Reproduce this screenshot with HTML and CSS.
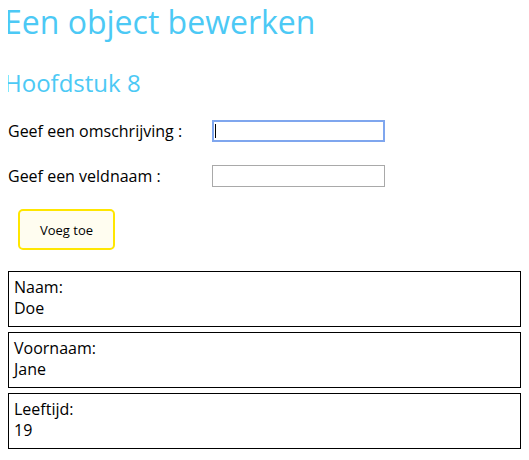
FILE: index.html
```html
<!DOCTYPE html>
<html lang="nl">
<head>
<meta charset="utf-8">
<title>Een object bewerken</title>
<link rel="stylesheet" href="styles.css">
</head>
<body>
<h1 class="title">Een object bewerken</h1>
<h2 class="subtitle">Hoofdstuk 8</h2>
<form class="form">
  <div class="row">
    <label class="label" for="omschrijving">Geef een omschrijving :</label>
    <span class="field-wrap">
      <input class="field field-focus" id="omschrijving" type="text">
      <span class="caret"></span>
    </span>
  </div>
  <div class="row">
    <label class="label" for="veldnaam">Geef een veldnaam :</label>
    <input class="field" id="veldnaam" type="text">
  </div>
  <button class="btn" type="button">Voeg toe</button>
</form>
<div class="list">
  <div class="item"><div>Naam:</div><div>Doe</div></div>
  <div class="item"><div>Voornaam:</div><div>Jane</div></div>
  <div class="item"><div>Leeftijd:</div><div>19</div></div>
</div>
</body>
</html>
```

FILE: styles.css
```css
body {
  margin: 0 8px;
  font-family: "Open Sans", sans-serif;
  color: #000;
  background: #fff;
}
.title {
  margin: 0 0 0 -4px;
  font-size: 32px;
  font-weight: 400;
  line-height: normal;
  color: #4cc9f5;
}
.subtitle {
  margin: 23px 0 0 -4px;
  font-size: 24px;
  font-weight: 400;
  line-height: normal;
  color: #4cc9f5;
}
.form {
  margin-top: 21px;
}
.row {
  display: flex;
  align-items: center;
  height: 22px;
  margin-bottom: 23px;
}
.row + .row {
  margin-bottom: 22px;
}
.label {
  width: 204px;
  font-size: 16px;
  line-height: normal;
}
.field-wrap {
  position: relative;
  display: block;
  height: 22px;
}
.caret {
  position: absolute;
  left: 3px;
  top: 4px;
  width: 1px;
  height: 14px;
  background: #000;
}
.field {
  box-sizing: border-box;
  width: 173px;
  height: 22px;
  margin: 0;
  padding: 0 3px;
  border: 1px solid #a9a9a9;
  outline: none;
  font-family: inherit;
  font-size: 13px;
}
.field-focus {
  display: block;
  border: 2px solid #7fa6ee;
}
.btn {
  box-sizing: border-box;
  display: block;
  margin: 0 0 21px 10px;
  padding: 0;
  width: 97px;
  height: 41px;
  background: #fffdf0;
  border: 2px solid #ffe600;
  border-radius: 5px;
  font-family: inherit;
  font-size: 13px;
  color: #000;
}
.list {
  display: flex;
  flex-direction: column;
  gap: 5px;
}
.item {
  border: 1px solid #000;
  height: 56px;
  box-sizing: border-box;
  padding: 5px 5px 7px;
  font-size: 16px;
  line-height: 21px;
}
```
